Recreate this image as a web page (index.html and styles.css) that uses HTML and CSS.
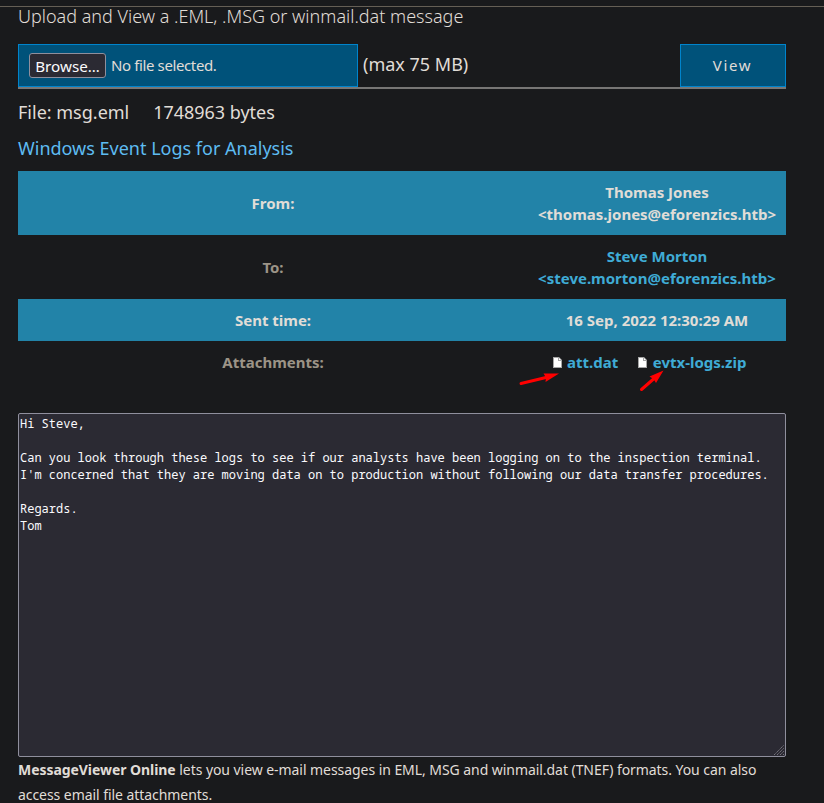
FILE: index.html
```
<!DOCTYPE html>
<html lang="en">
<head>
<meta charset="utf-8">
<title>MessageViewer Online</title>
<link rel="stylesheet" href="styles.css">
</head>
<body>
<main class="page">
  <h1 class="title">Upload and View a .EML, .MSG or winmail.dat message</h1>
  <form class="upload">
    <div class="file-field"><button type="button" class="browse">Browse…</button><span class="no-file">No file selected.</span></div>
    <span class="limit">(max 75 MB)</span>
    <button type="button" class="view">View</button>
  </form>
  <p class="file-info"><span>File: msg.eml</span><span>1748963 bytes</span></p>
  <h2 class="subject">Windows Event Logs for Analysis</h2>
  <div class="headers">
    <div class="row filled"><div class="label">From:</div><div class="value"><span class="from-name">Thomas Jones</span><br><span class="from-mail">&lt;thomas.jones@eforenzics.htb&gt;</span></div></div>
    <div class="row"><div class="label">To:</div><div class="value"><span class="to-name">Steve Morton</span><br><span class="to-mail">&lt;steve.morton@eforenzics.htb&gt;</span></div></div>
    <div class="row filled"><div class="label">Sent time:</div><div class="value">16 Sep, 2022 12:30:29 AM</div></div>
    <div class="row"><div class="label">Attachments:</div><div class="value files">
      <a class="file"><svg class="doc" width="9" height="11" viewBox="0 0 9 11"><path d="M0 0H6L9 3V11H0Z" fill="#a5a5a5"/><path d="M1 1H5V4H8V10H1Z" fill="#fff"/><path d="M6 1L8 3H6Z" fill="#fff"/></svg>att.dat
        <svg class="arrow arrow-one" width="41" height="14" viewBox="0 0 41 14"><path d="M2 11.5L27 5.5" stroke="#f00" stroke-width="3" stroke-linecap="round"/><path d="M40 1.5L24.5 1.5L27 5.5L26.5 10Z" fill="#f00"/></svg></a>
      <a class="file"><svg class="doc" width="9" height="11" viewBox="0 0 9 11"><path d="M0 0H6L9 3V11H0Z" fill="#a5a5a5"/><path d="M1 1H5V4H8V10H1Z" fill="#fff"/><path d="M6 1L8 3H6Z" fill="#fff"/></svg>evtx-logs.zip
        <svg class="arrow arrow-two" width="26" height="22" viewBox="0 0 26 22"><path d="M2.5 19.5L14.5 9" stroke="#f00" stroke-width="3" stroke-linecap="round"/><path d="M24.5 .5L10.5 6.5L14.5 9L17 13Z" fill="#f00"/></svg></a>
    </div></div>
  </div>
  <div class="message"><pre class="body-text">Hi Steve,

Can you look through these logs to see if our analysts have been logging on to the inspection terminal.
I'm concerned that they are moving data on to production without following our data transfer procedures.

Regards.
Tom</pre><svg class="grip" width="12" height="12" viewBox="0 0 12 12" fill="none" stroke="#77757e" stroke-dasharray="1.5 .5"><path d="M1 11L11 1M4 11L11 4M7 11L11 7M10 11L11 10"/></svg></div>
  <p class="about"><b>MessageViewer Online</b> lets you view e-mail messages in EML, MSG and winmail.dat (TNEF) formats. You can also<br>access email file attachments.</p>
</main>
</body>
</html>
```
FILE: styles.css
```
* { box-sizing: border-box; }
html { overflow: hidden; background: #191a1c; }
body {
  margin: 6px 0 0;
  border-top: 1px solid #655f55;
  color: #e0ddd7;
  font-family: "Noto Sans", sans-serif;
  white-space: nowrap;
}
.page { width: 768px; margin-left: 18px; }
.title {
  height: 37px;
  margin: 0;
  font-size: 18px;
  font-weight: 300;
  line-height: 18px;
}
.upload {
  display: flex;
  height: 45px;
  border-bottom: 2px solid #777675;
}
.file-field {
  display: flex;
  align-items: center;
  width: 340px;
  padding-left: 10px;
  border: 1px solid #0084cc;
  background: #00527a;
}
.browse {
  width: 77px;
  height: 25px;
  padding: 0;
  border: 1px solid #8f8f9d;
  border-radius: 3px;
  background: #2b2a33;
  color: #fbfbfe;
  font: 15.2px/22px "Noto Sans", sans-serif;
}
.no-file { margin-left: 5px; font-size: 15px; line-height: 20px; letter-spacing: -.38px; padding-bottom: 1px; }
.limit { margin-left: 5px; font-size: 18px; line-height: 40px; }
.view {
  width: 106px;
  margin-left: auto;
  padding: 0 1px 2px 0;
  border: 1px solid #0084cc;
  background: #00527a;
  color: #e0ddd7;
  font: 15px "Noto Sans", sans-serif;
  letter-spacing: 1.7px;
}
.file-info {
  display: flex;
  gap: 24px;
  margin: 11px 0 0;
  font-size: 18px;
  line-height: 25px;
}
.file-info span + span { letter-spacing: -.03px; }
.subject {
  margin: 11px 0 10px;
  color: #5ebcf2;
  font-size: 18px;
  font-weight: 400;
  line-height: 25px;
}
.headers { font-size: 15px; font-weight: 700; line-height: 22px; text-align: center; }
.row {
  display: grid;
  grid-template-columns: 510px 258px;
  align-items: center;
  padding: 10px 0;
  color: #3fabd5;
}
.row .label { color: #9c9487; }
.filled, .filled .label { color: #e0ddd7; }
.filled { background: #2283a8; }
.files { display: flex; justify-content: center; gap: 20px; padding-right: 15px; }
.file { position: relative; }
.doc { margin-right: 5.5px; vertical-align: 0; }
.arrow { position: absolute; }
.arrow-one { left: -34px; top: 21px; }
.arrow-two { left: 1px; top: 19px; }
.message {
  position: relative;
  height: 344px;
  margin-top: 30px;
  padding: 1px;
  border: 1px solid #8f8f9d;
  border-radius: 2px;
  background: #2b2a33;
  color: #fbfbfe;
}
.body-text { margin: 0; font: 12px/17px "Noto Sans Mono", "DejaVu Sans Mono", monospace; }
.grip { position: absolute; right: 0; bottom: 0; }
.about { margin: 0; font-size: 14px; line-height: 25px; letter-spacing: -.057px; }
```
